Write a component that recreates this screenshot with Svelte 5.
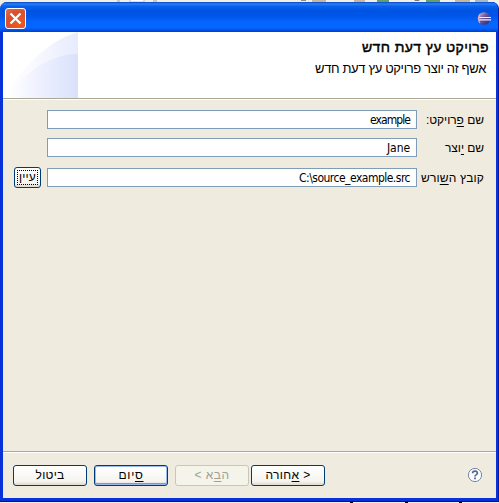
<script>
  const fields = [
    { id: 'project', before: 'שם ', key: 'פ', after: 'רויקט:', value: 'example', label: 58, width: 40 },
    { id: 'creator', before: 'שם ', key: 'י', after: 'וצר', value: 'Jane', label: 39, width: 23 },
    { id: 'root', before: 'קובץ ה', key: 'ש', after: 'ורש', value: 'C:\\source_example.src', label: 63, width: 111 }
  ];

  // Spread letter spacing so that each run takes its intended width.
  function fit(node, width) {
    node.style.letterSpacing = '0px';
    const natural = node.getBoundingClientRect().width;
    const count = node.textContent.length;
    node.style.letterSpacing = `${(width - natural) / count}px`;
  }
</script>

<div class="desktop">
  <div class="strip">
    <svg width="499" height="3" viewBox="0 0 499 3">
      <path d="M117 1h3M153 1h4M414 0h6" stroke="#aaa294" />
      <path d="M301 0h5M415 0h4" stroke="#30281c" />
      <path d="M312 1h14M354 1h11M455 1h15" stroke="#cbb698" stroke-width="2" />
      <path d="M377 1h12M426 1h14" stroke="#65a060" stroke-width="2" />
      <path d="M475 1h13" stroke="#a5b9c2" stroke-width="2" />
      <path d="M130 0v2h14V0" fill="#fff" stroke="#c4c0b5" />
    </svg>
  </div>
  <main class="window" dir="rtl">
    <div class="titlebar">
      <svg class="logo" width="15" height="13" viewBox="0 0 15 13">
        <defs>
          <linearGradient id="ball" x1="0" y1="0" x2="1" y2="1">
            <stop offset="0" stop-color="#d8c6e3" /><stop offset=".45" stop-color="#6a5599" /><stop offset="1" stop-color="#30236c" />
          </linearGradient>
        </defs>
        <circle cx="7" cy="6.5" r="6.3" fill="url(#ball)" />
        <path d="M1.5 5.5H14M1.5 7.9H14" stroke="#f0edfb" stroke-width="1.1" />
        <path d="M3 2Q0 6.5 3 11" stroke="#d6aebb" stroke-width="1.2" fill="none" />
      </svg>
      <button class="close" aria-label="סגור">
        <svg width="19" height="19" viewBox="0 0 19 19"><path d="M4.5 4.5l10 10M14.5 4.5l-10 10" stroke="#fff" stroke-width="2.2" /></svg>
      </button>
    </div>
    <div class="content">
      <header>
        <svg class="art" width="75" height="66" viewBox="0 0 75 66">
          <defs>
            <linearGradient id="pale"><stop offset="0" stop-color="#fff" /><stop offset=".35" stop-color="#fafaff" /><stop offset="1" stop-color="#e7ebfd" /></linearGradient>
            <linearGradient id="deep"><stop offset="0" stop-color="#fff" /><stop offset=".35" stop-color="#f1f3fe" /><stop offset="1" stop-color="#d9e1fb" /></linearGradient>
          </defs>
          <path d="M0 66Q34 12 75 0V66Z" fill="url(#pale)" />
          <path d="M6 61Q39 22 75 22V66H6Z" fill="url(#deep)" />
        </svg>
        <h1><span use:fit={127}>פרויקט עץ דעת חדש</span></h1>
        <p><span use:fit={171}>אשף זה יוצר פרויקט עץ דעת חדש</span></p>
      </header>
      <section>
        {#each fields as f}
          <div class="row {f.id}">
            <label for={f.id}><span use:fit={f.label}>{f.before}<u>{f.key}</u>{f.after}</span></label>
            <div class="input" id={f.id} dir="ltr"><span use:fit={f.width}>{f.value}</span></div>
            {#if f.id === 'root'}
              <button class="browse"><span use:fit={17}>עיין</span></button>
            {/if}
          </div>
        {/each}
      </section>
      <footer>
        <svg class="help" width="16" height="16" viewBox="0 0 16 16">
          <circle cx="8" cy="8" r="6.6" fill="#fbfcff" stroke="#7586aa" />
          <path d="M5.6 6.3Q5.6 4.1 8 4.1T10.4 6.2Q10.4 7.2 9 7.9Q8 8.3 8 9.6" stroke="#53658f" stroke-width="1.6" fill="none" />
          <path d="M7.1 10.5h1.8v1.7H7.1z" fill="#53658f" />
        </svg>
        <button class="back"><span use:fit={45}>&lt; <u>א</u>חורה</span></button>
        <button class="next" disabled><span use:fit={35}>ה<u>ב</u>א &gt;</span></button>
        <button class="finish"><span use:fit={25}><u>ס</u>יום</span></button>
        <button><span use:fit={29}>ביטול</span></button>
      </footer>
    </div>
  </main>
  <div class="below"></div>
</div>

<style>
  .desktop { width: 499px; height: 503px; overflow: hidden; background: #f1eee2; font: 12px/16px "Liberation Sans", sans-serif; color: #000; display: flex; flex-direction: column; box-sizing: border-box; }
  .desktop * { box-sizing: border-box; }
  .strip { height: 2px; flex: none; }
  .strip svg { display: block; }
  .window { height: 500px; flex: none; border-radius: 7px 7px 0 0; background: #0831d9; overflow: hidden; display: flex; flex-direction: column; border-right: 1px solid #001ca5; border-bottom: 1px solid #00138c; }
  .titlebar { height: 30px; flex: none; background: linear-gradient(#0645c8 0, #2b80f5 2px, #0a62ec 4px, #0054e3 8px, #0055e8 14px, #0465ff 20px, #0466ff 26px, #0050e8 28px, #0040c8); display: flex; align-items: center; justify-content: space-between; padding: 2px 6px 0 5px; }
  .logo { display: block; }
  .close { width: 21px; height: 21px; padding: 0; border: 1px solid #fff; border-radius: 3px; background: radial-gradient(circle at 70% 75%, #ee5b22, #d9502f 60%, #d97258); display: block; }
  .close svg { display: block; }
  .content { flex: 1; margin: 0 2px 3px 3px; background: #efebde; display: flex; flex-direction: column; }
  header { height: 67px; flex: none; background: #fff; border-bottom: 1px solid #aca899; display: grid; grid-template-columns: 1fr 75px; grid-template-rows: 26px 1fr; }
  .art { grid-column: 2; grid-row: 1 / 3; display: block; }
  h1 { grid-column: 1; grid-row: 1; margin: 0; padding: 6px 7px 0 0; font-size: 14px; font-weight: 400; line-height: 18px; -webkit-text-stroke: .45px #000; }
  p { grid-column: 1; grid-row: 2; margin: 0; padding: 3px 10px 0 0; font-size: 13px; }
  span { display: inline-block; white-space: pre; flex: none; }
  section { flex: 1; border-top: 1px solid #fff; padding: 10px 12px 0 10px; }
  .row { height: 19px; display: flex; margin-bottom: 9px; align-items: center; }
  .row.root { margin-top: 11px; }
  label { width: 67px; flex: none; line-height: 18px; }
  .input { width: 370px; height: 19px; flex: none; background: #fff; border: 1px solid #7f9db9; padding: 0 6px; text-align: right; font: 12px/18px "DejaVu Sans Condensed", "DejaVu Sans", sans-serif; }
  u { text-decoration: underline; text-underline-offset: 2px; text-decoration-thickness: 1px; text-decoration-skip-ink: none; }
  button { font: 12px/15px "Liberation Sans", sans-serif; color: #000; }
  footer button, .browse { height: 21px; padding: 0; border: 1px solid #003c74; border-radius: 3px; background: linear-gradient(#fff, #f5f4ef 80%, #dedad0); display: flex; justify-content: center; align-items: center; }
  .browse { width: 27px; margin-right: 6px; flex: none; outline: 1px dotted #000; outline-offset: -4px; }
  footer { height: 47px; flex: none; border-top: 1px solid #aca899; box-shadow: inset 0 1px #fff; display: flex; align-items: flex-start; padding: 13px 13px 0 10px; }
  footer button { width: 74px; margin-left: 7px; flex: none; }
  footer button:last-child { margin-left: 0; }
  .help { margin: 2px 0 0 auto; display: block; flex: none; }
  footer .back { margin-left: 2px; }
  footer .next { color: #a1a192; border-color: #c9c7ba; background: #f5f4ea; }
  footer .finish { box-shadow: inset 0 0 0 1px #9ab9ef, inset 0 -2px #7998dc; }
  .below { height: 1px; flex: none; background: linear-gradient(90deg, transparent 350px, #000 350px 353px, transparent 353px 405px, #000 405px 408px, transparent 408px 459px, #000 459px 462px, transparent 462px); }
</style>
